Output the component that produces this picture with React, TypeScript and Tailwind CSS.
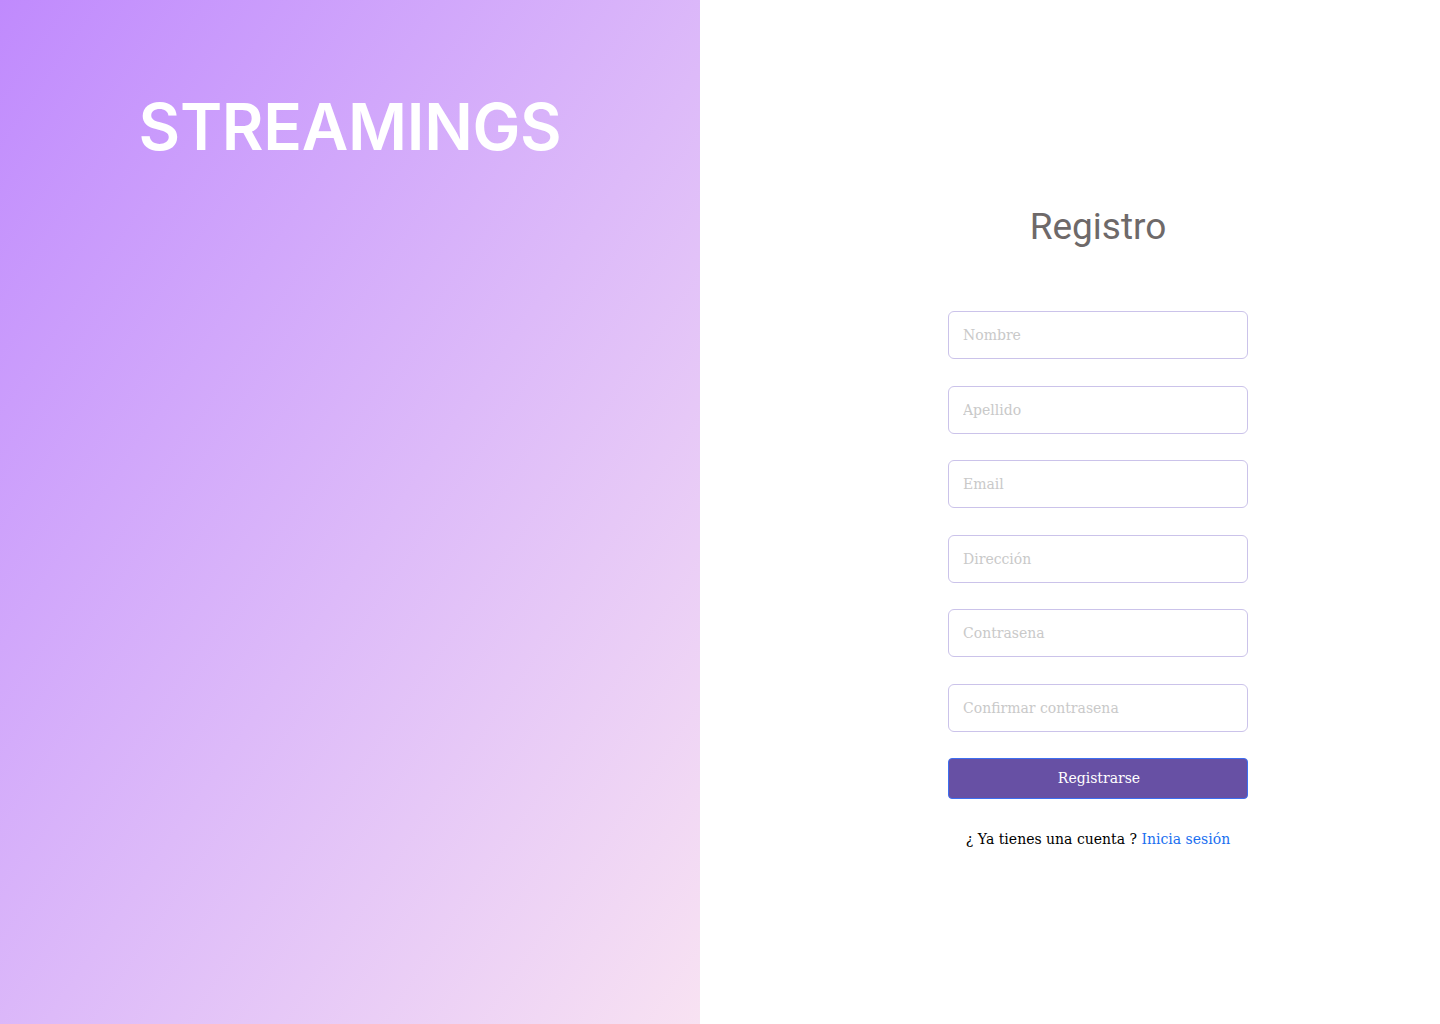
export default function App() {
  const fields = [
    { ph: "Nombre", type: "text" },
    { ph: "Apellido", type: "text" },
    { ph: "Email", type: "email" },
    { ph: "Dirección", type: "text" },
    { ph: "Contrasena", type: "password" },
    { ph: "Confirmar contrasena", type: "password" },
  ];

  return (
    <div className="flex w-full h-[1024px]">
      <div className="w-[700px] h-full bg-gradient-to-br from-[#c08afd] to-[#f8e2f2] flex justify-center pt-[95px]">
        <h1 className="text-white text-[64px] leading-none h-fit font-semibold tracking-[-0.3px] font-['Inter',sans-serif]">
          STREAMINGS
        </h1>
      </div>
      <div className="flex-1 bg-white flex justify-center pl-[56px] pt-[201px]">
        <div className="w-[300px] flex flex-col items-center font-['DejaVu_Serif',serif]">
          <h2 className="text-[37px] leading-none text-[#6e6969] font-['Roboto',sans-serif] mt-[7px] mb-[66px]">
            Registro
          </h2>
          <form className="w-full flex flex-col gap-[26.5px]" onSubmit={(e) => e.preventDefault()}>
            {fields.map((f) => (
              <input
                key={f.ph}
                type={f.type}
                placeholder={f.ph}
                className="w-full h-[48px] border border-[#cbc3ea] rounded-[6px] px-[14px] text-[14px] placeholder:text-[#c9c9c9] outline-none"
              />
            ))}
            <button
              type="submit"
              className="w-full h-[41px] -mt-[0.5px] rounded-[4px] bg-[#6750a4] border border-[#3d6ef0] text-white text-[14px] pl-[2px]"
            >
              Registrarse
            </button>
          </form>
          <p className="mt-[30px] text-[14px] text-black whitespace-nowrap">
            ¿ Ya tienes una cuenta ? <a href="#" className="text-[#1a6ff0]">Inicia sesión</a>
          </p>
        </div>
      </div>
    </div>
  );
}
